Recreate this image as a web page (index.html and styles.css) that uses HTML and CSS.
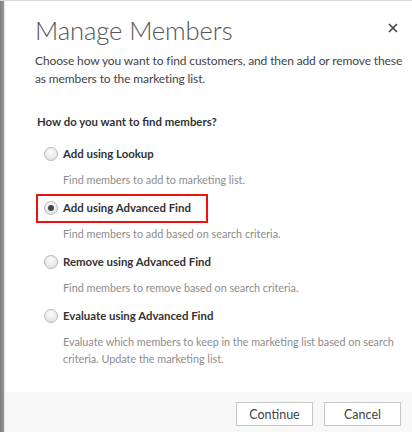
FILE: index.html
```html
<!DOCTYPE html>
<html>
<head>
<meta charset="utf-8">
<link rel="stylesheet" href="styles.css">
</head>
<body>
<div class="frame">
  <div class="edge"></div>
  <div class="dialog">
    <div class="main">
      <div class="header">
        <h1 class="title">Manage Members</h1>
        <button class="close" aria-label="Close">
          <svg width="10" height="10" viewBox="0 0 10 10"><path d="M1 1L9 9M9 1L1 9" stroke="#444" stroke-width="1.6" fill="none"/></svg>
        </button>
      </div>
      <p class="intro">Choose how you want to find customers, and then add or remove these as members to the marketing list.</p>
      <div class="question">How do you want to find members?</div>
      <div class="options">
        <div class="option">
          <label class="opt-label"><span class="radio"></span>Add using Lookup</label>
          <div class="desc">Find members to add to marketing list.</div>
        </div>
        <div class="option">
          <label class="opt-label highlighted"><span class="radio checked"></span>Add using Advanced Find</label>
          <div class="desc">Find members to add based on search criteria.</div>
        </div>
        <div class="option">
          <label class="opt-label"><span class="radio"></span>Remove using Advanced Find</label>
          <div class="desc">Find members to remove based on search criteria.</div>
        </div>
        <div class="option">
          <label class="opt-label"><span class="radio"></span>Evaluate using Advanced Find</label>
          <div class="desc last">Evaluate which members to keep in the marketing list based on search criteria. Update the marketing list.</div>
        </div>
      </div>
    </div>
    <div class="footer">
      <button class="btn">Continue</button>
      <button class="btn">Cancel</button>
    </div>
  </div>
</div>
</body>
</html>
```
FILE: styles.css
```css
* { box-sizing: border-box; }
html, body { margin: 0; padding: 0; height: 100%; }
body { font-family: Lato, "Open Sans", sans-serif; background: #fff; }
.frame { display: flex; height: 432px; border-top: 1px solid #d8d8d8; }
.edge { width: 4px; background: linear-gradient(to right, #7c7c7c, #9a9a9a); flex: none; }
.dialog { flex: 1; display: flex; flex-direction: column; border-left: 1px solid #e4e4e4; }
.main { flex: 1; padding: 10px 0 0 30px; }
.header { display: flex; align-items: flex-start; justify-content: space-between; padding-right: 12px; }
.title { margin: 0; font-size: 25.6px; font-weight: 300; color: #555; line-height: 38px; letter-spacing: -0.1px; }
.close { background: none; border: 0; padding: 0; width: 14px; height: 14px; display: flex; align-items: center; justify-content: center; margin-top: 10px; }
.intro { margin: 3px 0 0; font-size: 12px; line-height: 18px; color: #444; padding-right: 4px; letter-spacing: -0.12px; }
.question { margin-top: 26px; padding-left: 2px; font-size: 11.4px; font-weight: 700; color: #333; line-height: 16px; }
.options { display: flex; flex-direction: column; gap: 12px; margin-top: 16px; }
.option { display: flex; flex-direction: column; gap: 9px; }
.opt-label { display: flex; align-items: center; gap: 5px; font-size: 11.4px; font-weight: 700; color: #333; line-height: 16px; padding-left: 9px; }
.opt-label.highlighted { align-self: flex-start; outline: 2px solid #ee1111; margin: -4px 0 -5px 3px; padding: 4px 15px 5px 6px; }
.radio { width: 14px; height: 14px; border-radius: 50%; border: 1px solid #b8b8b8; background: radial-gradient(circle at 50% 35%, #fdfdfd, #dcdcdc); flex: none; display: flex; align-items: center; justify-content: center; }
.radio.checked::after { content: ""; width: 6px; height: 6px; border-radius: 50%; background: #444; }
.desc { padding-left: 28px; font-size: 10.8px; color: #8c8c8c; line-height: 17px; }
.desc.last { padding-right: 10px; }
.footer { flex: none; height: 40px; background: #f8f8f8; display: flex; justify-content: flex-end; align-items: flex-start; gap: 11px; padding: 10px 11px 0 0; }
.btn { width: 77px; height: 24px; background: #fff; border: 1px solid #c8c8c8; font-family: inherit; font-size: 12.5px; color: #444; padding: 0; }
```
